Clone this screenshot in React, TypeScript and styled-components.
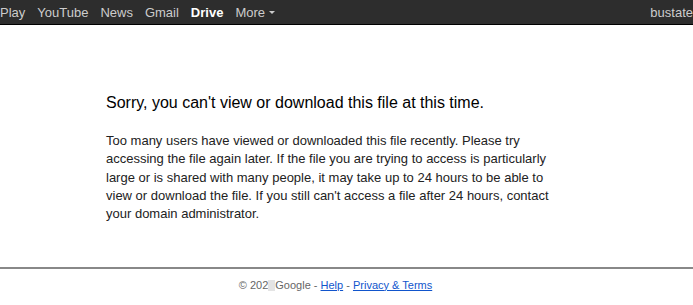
import React from "react";
import styled, { createGlobalStyle } from "styled-components";

const Global = createGlobalStyle`
  html, body { margin: 0; padding: 0; background: #fff; }
  body { font-family: Arial, "Liberation Sans", sans-serif; overflow: hidden; }
`;

const Bar = styled.div`
  height: 24px;
  background: #2d2d2d;
  border-bottom: 1px solid #000;
  display: flex;
  align-items: center;
  justify-content: space-between;
  white-space: nowrap;
  overflow: hidden;
`;

const Nav = styled.div`
  display: flex;
  align-items: center;
  gap: 12px;
`;

const NavItem = styled.span<{ $active?: boolean }>`
  font-size: 13px;
  color: ${(p) => (p.$active ? "#fff" : "#ccc")};
  font-weight: ${(p) => (p.$active ? "bold" : "normal")};
  display: inline-flex;
  align-items: center;
`;

const Caret = styled.span`
  display: inline-block;
  margin-left: 4px;
  width: 0;
  height: 0;
  border-left: 3px solid transparent;
  border-right: 3px solid transparent;
  border-top: 3px solid #ccc;
`;

const User = styled.span`
  font-size: 13px;
  color: #ccc;
  margin-right: 0;
`;

const Main = styled.div`
  height: 242px;
  padding: 69px 0 0 106px;
  box-sizing: border-box;
`;

const Title = styled.h1`
  margin: 0 0 20px;
  font-size: 16px;
  font-weight: normal;
  color: #000;
`;

const Body = styled.p`
  margin: 0;
  width: 460px;
  font-size: 13px;
  line-height: 18.3px;
  color: #222;
`;

const Footer = styled.div`
  border-top: 2px solid #888;
  height: 34px;
  display: flex;
  justify-content: center;
  align-items: center;
  font-size: 11px;
  color: #666;
  padding: 0 22px 0 0;
  box-sizing: border-box;
`;

const Redact = styled.span`
  display: inline-block;
  width: 7px;
  height: 11px;
  background: #e4e4e4;
  vertical-align: middle;
`;

const Link = styled.a`
  color: #15c;
  text-decoration: underline;
`;

export default function App() {
  return (
    <>
      <Global />
      <Bar>
        <Nav>
          <NavItem>Play</NavItem>
          <NavItem>YouTube</NavItem>
          <NavItem>News</NavItem>
          <NavItem>Gmail</NavItem>
          <NavItem $active>Drive</NavItem>
          <NavItem>
            More<Caret />
          </NavItem>
        </Nav>
        <User>bustate</User>
      </Bar>
      <Main>
        <Title>Sorry, you can't view or download this file at this time.</Title>
        <Body>
          Too many users have viewed or downloaded this file recently. Please try
          accessing the file again later. If the file you are trying to access is
          particularly large or is shared with many people, it may take up to 24
          hours to be able to view or download the file. If you still can't access
          a file after 24 hours, contact your domain administrator.
        </Body>
      </Main>
      <Footer>
        <span>
          © 202<Redact />Google - <Link href="#">Help</Link> -{" "}
          <Link href="#">Privacy &amp; Terms</Link>
        </span>
      </Footer>
    </>
  );
}
